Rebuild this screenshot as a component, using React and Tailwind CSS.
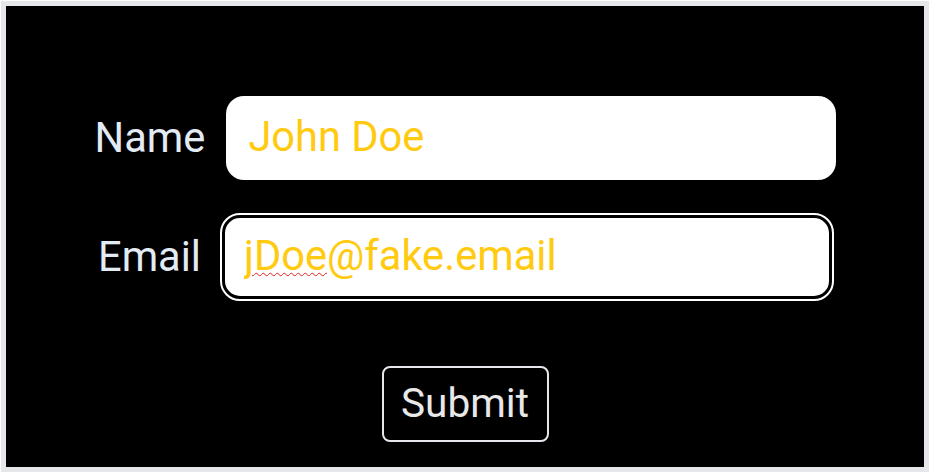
import { useState } from "react";

export default function App() {
    const [name, setName] = useState("John Doe");
    const [email, setEmail] = useState("jDoe@fake.email");

    return (
        <div className="bg-white w-[931px] h-[475px] p-[1px] font-['Roboto',sans-serif]">
            <div className="w-[928px] h-[471px] bg-black border-[5px] border-[#e5e7eb] flex flex-col items-center pt-[90px]">
                <div className="flex items-center gap-[21px] pl-[1px]">
                    <label className="text-[41.6px] leading-none text-[#e3ecf5]">Name</label>
                    <input
                        type="text"
                        value={name}
                        onChange={(e) => setName(e.target.value)}
                        className="w-[610px] h-[84px] bg-white rounded-[18px] border-[3px] border-transparent px-[19px] pb-[4px] text-[41.6px] text-[#ffca0f] outline-none"
                    />
                </div>

                <div className="flex items-center gap-[21px] mt-[35px]">
                    <label className="text-[41.6px] leading-none text-[#e3ecf5]">Email</label>
                    <div className="relative w-[610px] h-[84px]">
                        <input
                            type="text"
                            value={email}
                            onChange={(e) => setEmail(e.target.value)}
                            className="w-full h-full bg-white rounded-[18px] border-[3px] border-black px-[19px] pb-[4px] text-[41.6px] text-[#ffca0f] outline-2 outline-solid outline-white"
                        />
                        {/* spellcheck squiggle */}
                        <span className="absolute left-[22px] top-0 h-full pb-[4px] flex items-center pointer-events-none text-[41.6px] text-transparent underline decoration-wavy decoration-[#e02020] decoration-1 underline-offset-[3px]">
                            jDoe
                        </span>
                    </div>
                </div>

                <button className="mt-[67px] w-[167px] h-[76px] border-2 border-[#e5e7eb] rounded-lg pb-[2px] text-[40.6px] text-[#e8e8e8] flex items-center justify-center">
                    Submit
                </button>
            </div>
        </div>
    );
}
